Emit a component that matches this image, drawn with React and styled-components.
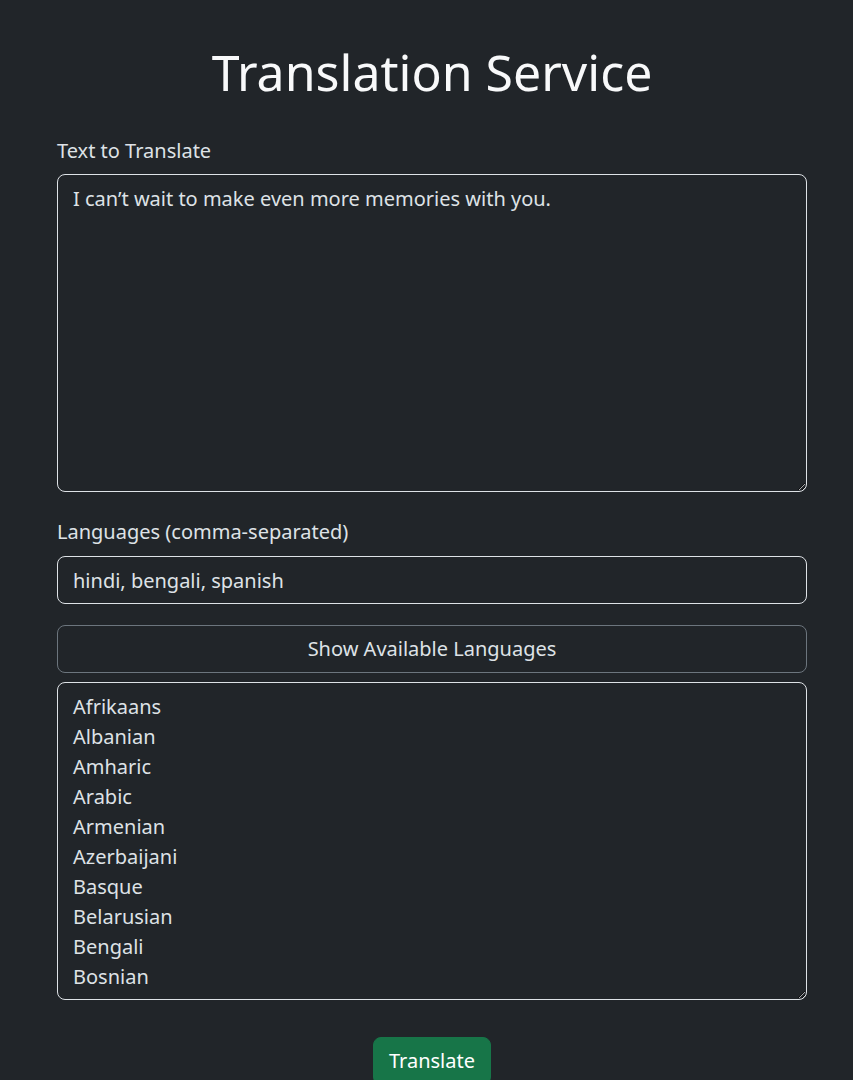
import styled, { createGlobalStyle } from 'styled-components';

const GlobalStyle = createGlobalStyle`
  html, body {
    margin: 0;
    padding: 0;
    background: #212529;
    color-scheme: dark;
  }
  body {
    font-family: "Noto Sans", "Liberation Sans", sans-serif;
    color: #dee2e6;
  }
  * {
    box-sizing: border-box;
  }
`;

const languages = [
  'Afrikaans',
  'Albanian',
  'Amharic',
  'Arabic',
  'Armenian',
  'Azerbaijani',
  'Basque',
  'Belarusian',
  'Bengali',
  'Bosnian',
];

function App() {
  return (
    <>
      <GlobalStyle />
      <Page>
        <Container>
          <Title>Translation Service</Title>
          <Field>
            <Label htmlFor="text" $gap={8}>Text to Translate</Label>
            <TextArea
              id="text"
              rows={10}
              defaultValue="I can’t wait to make even more memories with you."
            />
          </Field>
          <Field $gap={21}>
            <Label htmlFor="langs">Languages (comma-separated)</Label>
            <Input id="langs" type="text" defaultValue="hindi, bengali, spanish" />
          </Field>
          <OutlineButton type="button">Show Available Languages</OutlineButton>
          <TextArea rows={10} readOnly value={languages.join('\n')} />
          <Actions>
            <SubmitButton type="button">Translate</SubmitButton>
          </Actions>
        </Container>
      </Page>
    </>
  );
}

const Page = styled('div')`
  padding: 42px 46px 0 57px;
`;

const Container = styled('div')`
  width: 750px;
  display: flex;
  flex-direction: column;
`;

const Title = styled('h1')`
  margin: 0 0 34px;
  font-size: 50px;
  font-weight: 400;
  line-height: 60px;
  text-align: center;
  color: #f8f9fa;
`;

const Field = styled('div')`
  display: flex;
  flex-direction: column;
  margin-bottom: ${(p) => p.$gap ?? 25}px;
`;

const Label = styled('label')`
  font-size: 20px;
  line-height: 30px;
  margin-bottom: ${(p) => p.$gap ?? 9}px;
`;

const controlStyles = `
  width: 100%;
  font-family: "Noto Sans", "Liberation Sans", sans-serif;
  font-size: 20px;
  line-height: 30px;
  color: #dee2e6;
  background: #212529;
  border: 1px solid #dee2e6;
  border-radius: 8px;
  padding: 8px 15px;
  outline: none;
  margin: 0;
`;

const TextArea = styled('textarea')`
  ${controlStyles}
  display: block;
  resize: vertical;
  overflow: hidden;
  padding-top: 9px;
  padding-bottom: 7px;
`;

const Input = styled('input')`
  ${controlStyles}
  height: 48px;
`;

const OutlineButton = styled('button')`
  width: 100%;
  height: 48px;
  margin-bottom: 9px;
  font-family: "Noto Sans", "Liberation Sans", sans-serif;
  font-size: 20px;
  line-height: 30px;
  color: #dee2e6;
  background: transparent;
  border: 1px solid #6c757d;
  border-radius: 8px;
  padding: 8px 16px;
  cursor: pointer;
`;

const Actions = styled('div')`
  display: flex;
  justify-content: center;
  margin-top: 37px;
`;

const SubmitButton = styled('button')`
  font-family: "Noto Sans", "Liberation Sans", sans-serif;
  font-size: 20px;
  line-height: 30px;
  color: #fff;
  background: #177548;
  border: 1px solid #177548;
  border-radius: 8px;
  padding: 8px 15px;
  cursor: pointer;
`;

export default App;
